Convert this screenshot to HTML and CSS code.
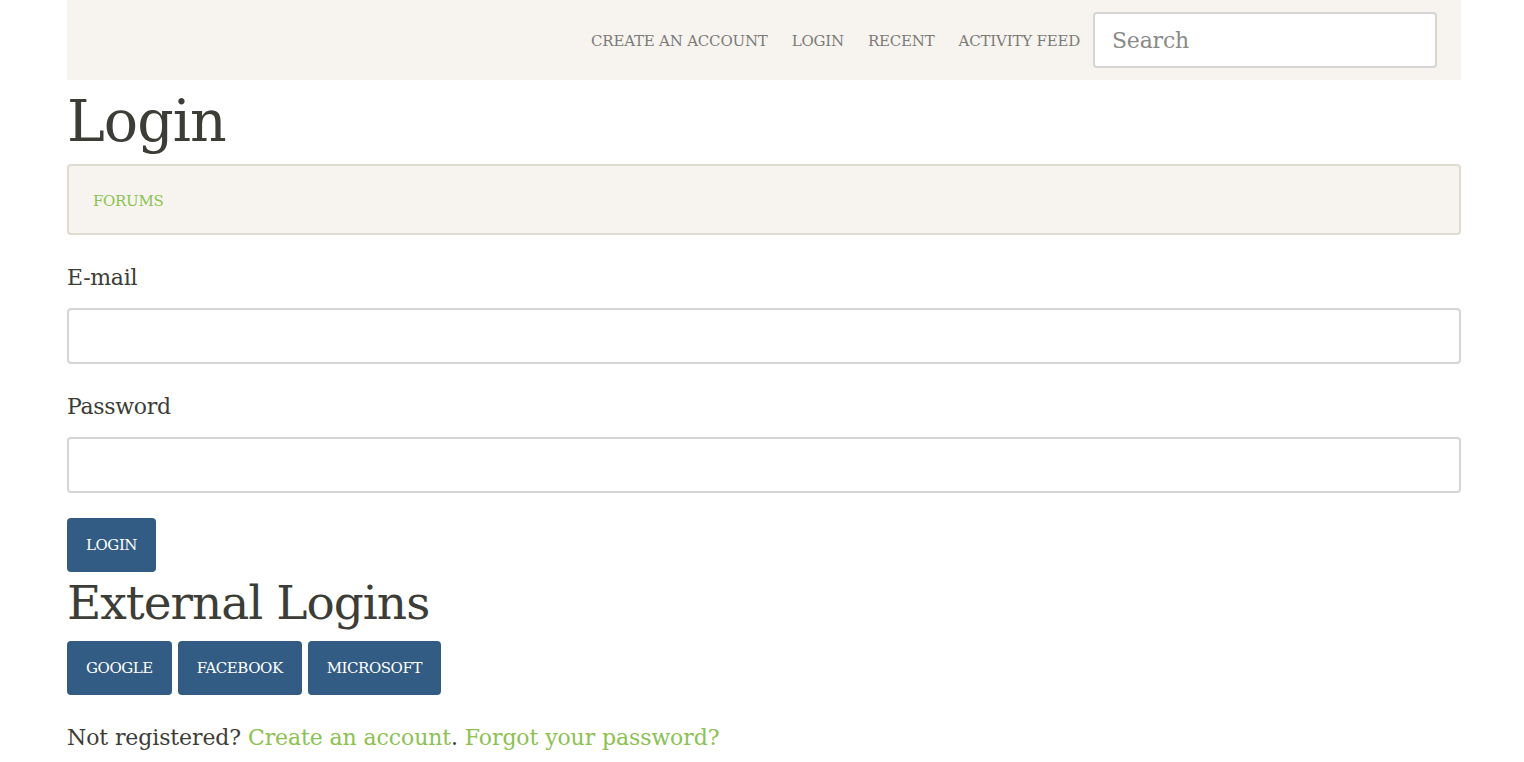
FILE: index.html
```html
<!DOCTYPE html>
<html lang="en">
<head>
<meta charset="utf-8">
<title>Login</title>
<link rel="stylesheet" href="styles.css">
</head>
<body>
<div class="page">
  <header class="topbar">
    <nav class="nav">
      <a href="#">Create an account</a>
      <a href="#">Login</a>
      <a href="#">Recent</a>
      <a href="#">Activity feed</a>
    </nav>
    <input class="search" type="text" placeholder="Search">
  </header>
  <h1 class="title">Login</h1>
  <div class="crumbs"><a href="#">Forums</a></div>
  <form class="form">
    <label class="label">E-mail</label>
    <input class="field" type="text">
    <label class="label">Password</label>
    <input class="field" type="password">
    <button class="btn" type="button">Login</button>
  </form>
  <h2 class="subtitle">External Logins</h2>
  <div class="btns">
    <button class="btn" type="button">Google</button>
    <button class="btn" type="button">Facebook</button>
    <button class="btn" type="button">Microsoft</button>
  </div>
  <p class="note">Not registered? <a href="#">Create an account</a>. <a href="#">Forgot your password?</a></p>
</div>
</body>
</html>
```
FILE: styles.css
```css
* { box-sizing: border-box; }
body {
  margin: 0;
  font-family: "DejaVu Serif", "Liberation Serif", serif;
  color: #3d3d38;
  background: #fff;
}
.page {
  width: 1394px;
  margin-left: 67px;
}
.topbar {
  background: #f7f4ef;
  height: 80px;
  display: flex;
  align-items: center;
  justify-content: flex-end;
  padding-right: 24px;
}
.nav {
  display: flex;
  gap: 24px;
  margin-right: 13px;
  padding-top: 1px;
}
.nav a {
  color: #7b7b78;
  text-decoration: none;
  text-transform: uppercase;
  font-size: 15px;
  letter-spacing: -0.2px;
}
.search {
  width: 344px;
  height: 56px;
  border: 2px solid #d5d5d5;
  border-radius: 4px;
  padding: 0 17px;
  font-family: inherit;
  font-size: 22px;
  letter-spacing: -0.2px;
  color: #555;
  background: #fff;
}
.search::placeholder { color: #8a8a8a; }
.title {
  margin: 0;
  font-weight: normal;
  font-size: 57px;
  line-height: 82px;
  letter-spacing: -1px;
  color: #3d3d38;
}
.crumbs {
  height: 71px;
  margin-top: 2px;
  background: #f7f4ef;
  border: 2px solid #e0dbd0;
  border-radius: 4px;
  display: flex;
  align-items: center;
  padding-left: 24px;
  margin-bottom: 28px;
}
.crumbs a {
  color: #8cc152;
  text-decoration: none;
  text-transform: uppercase;
  font-size: 15px;
  letter-spacing: -0.3px;
  padding-top: 2px;
}
.form {
  display: flex;
  flex-direction: column;
  align-items: flex-start;
}
.label {
  font-size: 22px;
  letter-spacing: -0.3px;
  line-height: 30px;
  margin-bottom: 15px;
}
.field {
  width: 100%;
  height: 56px;
  border: 2px solid #d5d5d5;
  border-radius: 4px;
  margin-bottom: 28px;
  font-family: inherit;
  font-size: 20px;
  padding: 0 16px;
}
.field:last-of-type { margin-bottom: 25px; }
.btn {
  background: #335c84;
  color: #fff;
  border: none;
  border-radius: 4px;
  height: 54px;
  padding: 0 19px;
  font-family: inherit;
  font-size: 15px;
  letter-spacing: -0.45px;
  text-transform: uppercase;
  cursor: pointer;
}
.subtitle {
  margin: 0 0 7px;
  font-weight: normal;
  font-size: 47px;
  line-height: 62px;
  letter-spacing: -1px;
  color: #3d3d38;
}
.btns {
  display: flex;
  gap: 6px;
}
.note {
  margin: 30px 0 0;
  font-size: 22px;
  letter-spacing: -0.1px;
}
.note a {
  color: #8cc152;
  text-decoration: none;
}
```
